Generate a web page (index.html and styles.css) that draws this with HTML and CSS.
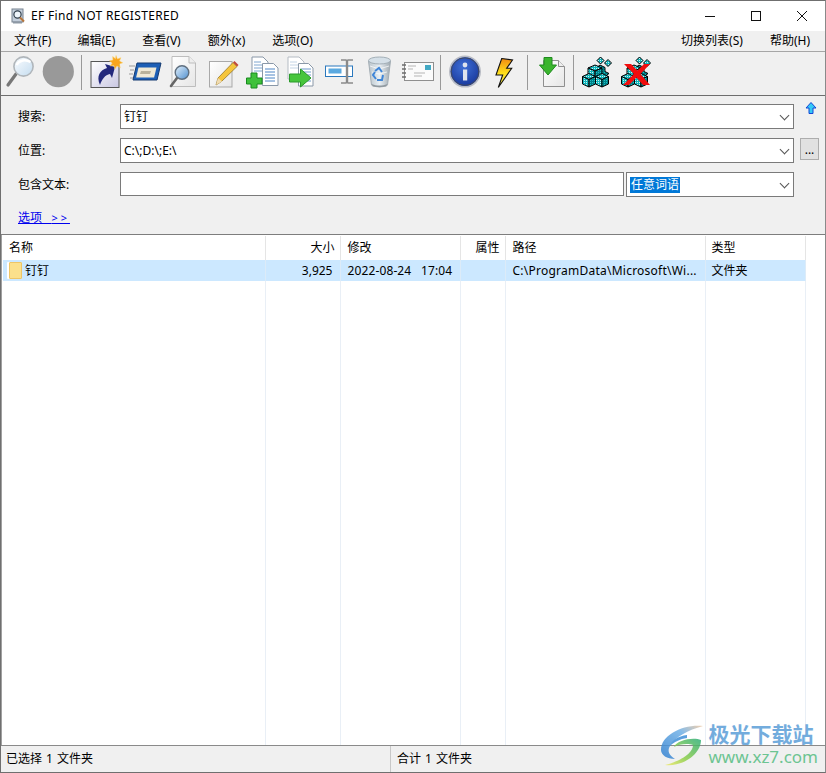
FILE: index.html
```html
<!DOCTYPE html>
<html lang="zh-CN">
  <head>
    <meta charset="UTF-8" />
    <meta name="viewport" content="width=device-width, initial-scale=1.0" />
    <link rel="stylesheet" href="styles.css">
    <title>EF Find NOT REGISTERED</title>
  </head>
  <body>
    <div class="window">
      <div class="titlebar">
        <svg class="app-icon" width="16" height="16" viewBox="0 0 16 16">
          <rect x="2" y="1" width="11" height="13" fill="#c3cedb" stroke="#76828f"/>
          <circle cx="7.5" cy="6.5" r="3.6" fill="#eef5fb" stroke="#34424f" stroke-width="1.2"/>
          <path d="M10 9.5l4 4" stroke="#b8763a" stroke-width="2"/>
          <path d="M3 14.500h9" stroke="#8d98a4" stroke-width="2"/>
        </svg>
        <span class="title-text">EF Find NOT REGISTERED</span>
        <div class="win-buttons">
          <svg width="10" height="10" viewBox="0 0 10 10"><path d="M0 5.5h10" stroke="#111"/></svg>
          <svg width="10" height="10" viewBox="0 0 10 10"><rect x=".5" y=".5" width="9" height="9" fill="none" stroke="#111"/></svg>
          <svg width="10" height="10" viewBox="0 0 10 10"><path d="M0 0l10 10M10 0L0 10" stroke="#111"/></svg>
        </div>
      </div>

      <div class="menubar">
        <span>文件(F)</span>
        <span>编辑(E)</span>
        <span>查看(V)</span>
        <span>额外(x)</span>
        <span>选项(O)</span>
        <span class="menu-right">切换列表(S)</span>
        <span>帮助(H)</span>
      </div>

      <div class="toolbar">
        <!-- every icon uses a viewBox in window coordinates -->
        <svg width="38" height="36" viewBox="1 55 38 36">
          <defs>
            <linearGradient id="lens" x1="0" y1="0" x2="1" y2="1">
              <stop offset="0" stop-color="#fbfdff"/>
              <stop offset="1" stop-color="#c4dcef"/>
            </linearGradient>
            <linearGradient id="lens2" x1="0" y1="0" x2="1" y2="1">
              <stop offset="0" stop-color="#e4f1fb"/>
              <stop offset="1" stop-color="#4e8fd0"/>
            </linearGradient>
            <linearGradient id="page" x1="0" y1="0" x2="1" y2="1">
              <stop offset="0" stop-color="#ffffff"/>
              <stop offset="1" stop-color="#e6e6e6"/>
            </linearGradient>
            <linearGradient id="lav" x1="0" y1="0" x2="1" y2="1">
              <stop offset="0" stop-color="#ffffff"/>
              <stop offset="1" stop-color="#c9c7e2"/>
            </linearGradient>
            <linearGradient id="bin" x1="0" y1="0" x2="1" y2="0">
              <stop offset="0" stop-color="#b9c4cb"/>
              <stop offset=".5" stop-color="#e8eff4"/>
              <stop offset="1" stop-color="#9fa9b0"/>
            </linearGradient>
            <radialGradient id="ball" cx=".45" cy=".35" r=".75">
              <stop offset="0" stop-color="#3f6fd6"/>
              <stop offset="1" stop-color="#122f92"/>
            </radialGradient>
            <linearGradient id="bolt" x1="0" y1="0" x2="0" y2="1">
              <stop offset="0" stop-color="#f08a12"/>
              <stop offset=".5" stop-color="#ffe01c"/>
              <stop offset="1" stop-color="#fff25c"/>
            </linearGradient>
            <pattern id="dots" width="2" height="2" patternUnits="userSpaceOnUse">
              <rect width="2" height="2" fill="#0fb4ba"/>
              <rect width="1" height="1" fill="#c8f4f4"/>
            </pattern>
            <pattern id="dots-dark" width="2" height="2" patternUnits="userSpaceOnUse">
              <rect width="2" height="2" fill="#007f86"/>
              <rect width="1" height="1" fill="#19c2c8"/>
            </pattern>
          </defs>
          <path d="M16 74L8 85" stroke="#777" stroke-width="3.2" stroke-linecap="round"/>
          <circle cx="23.5" cy="66.5" r="9.6" fill="url(#lens)" stroke="#b0b6bb" stroke-width="1.6"/>
          <path d="M16.5 65c3-5 9-6 14-3" stroke="#fff" stroke-width="2.4" fill="none"/>
        </svg>
        <svg width="38" height="36" viewBox="39 55 38 36">
          <circle cx="58.3" cy="71.6" r="15.6" fill="#999"/>
        </svg>
        <div class="tool-sep"></div>
        <svg width="40" height="36" viewBox="85 55 40 36">
          <rect x="91" y="61.5" width="28" height="26" fill="url(#lav)" stroke="#555"/>
          <path d="M100 85c-4-9 0-15 7-17l-2-4 10 3-3 11-2-4c-5 1-8 5-10 11z" fill="#23287c"/>
          <path d="M116 55.5l1.4 3.4 3.5-1.2-1.4 3.4 3.2 1.7-3.4 1.3 1 3.5-3.4-1.6-2 3-1-3.5-3.5.6 1.8-3.1-2.8-2.2 3.5-.7-.2-3.600 2.8 2.200z" fill="#f9a51e" stroke="#fbd36b" stroke-width=".5"/>
        </svg>
        <svg width="40" height="36" viewBox="125 55 40 36">
          <path d="M129 66h6M130 70h4M129 74h4M130 78h3" stroke="#9a9a9a"/>
          <path d="M137 63h24l-4 17h-24z" fill="#1d5fb5" stroke="#143a70"/>
          <path d="M138.500 67.500h18l-2.400 10h-18z" fill="#efe9d5"/>
          <path d="M141 71h10l-1 3h-10z" fill="#b9b29b"/>
        </svg>
        <svg width="38" height="36" viewBox="165 55 38 36">
          <path d="M172 56.500h17l6.500 6.500v23.500h-23.500z" fill="url(#page)" stroke="#bdbdbd"/>
          <path d="M189 56.500v6.500h6.500" fill="#eee" stroke="#bdbdbd"/>
          <path d="M177 78l-6 8" stroke="#666" stroke-width="2.600" stroke-linecap="round"/>
          <circle cx="182" cy="72.500" r="6.800" fill="url(#lens2)" stroke="#5f6f7f" stroke-width="1.400"/>
        </svg>
        <svg width="39" height="36" viewBox="203 55 39 36">
          <rect x="209.500" y="61.500" width="22.500" height="25.500" fill="url(#page)" stroke="#a9a9a9"/>
          <path d="M216 85l2-7 15-15.500 4 4-15.500 15z" fill="#f5c53c" stroke="#8a6a1c" stroke-width=".7"/>
          <path d="M216 85l2-7 4 3.500z" fill="#f1dcb0"/>
          <path d="M233 62.500l1.500-1.500 4 4-1.500 1.500z" fill="#c0483a"/>
        </svg>
        <svg width="40" height="36" viewBox="242 55 40 36">
          <path d="M252 57h11l5 5v18h-16z" fill="#fff" stroke="#8a98a8"/>
          <path d="M254 62h7M254 65h11M254 68h8M254 71h8" stroke="#7fa6d0"/>
          <path d="M262.500 63.500h11l4.500 4.500v17.500h-15.500z" fill="#fff" stroke="#8a98a8"/>
          <path d="M265 69h10M265 72h10M265 75h10M265 78h10M265 81h10" stroke="#4f86c6"/>
          <path d="M251 73h6v5h5v6h-5v4h-6v-4h-4.500v-6h4.500z" fill="#3fc13b" stroke="#188a1e"/>
        </svg>
        <svg width="38" height="36" viewBox="282 55 38 36">
          <path d="M288 57h11l5 5v17h-16z" fill="#fff" stroke="#b5bcc4"/>
          <path d="M290 62h7M290 65h11M290 68h11" stroke="#c3d4e6"/>
          <path d="M298.500 63.500h10l4.500 4.500v18h-14.500z" fill="#fff" stroke="#8a98a8"/>
          <path d="M301 69h10M301 72h10M306 75h5M306 78h5M301 81h10" stroke="#6f9bcb"/>
          <path d="M289.500 74h11v-5l10.500 9-10.500 9v-5h-11z" fill="#47c53c" stroke="#2a9a2a"/>
        </svg>
        <svg width="40" height="36" viewBox="320 55 40 36">
          <rect x="325.500" y="66" width="27" height="10.500" fill="#fff" stroke="#2a78bd"/>
          <rect x="328.500" y="68.500" width="13" height="5" fill="#5ba9e0"/>
          <path d="M341 60h5l1 1 1-1h5M341 83h5l1-1 1 1h5" fill="none" stroke="#8a8a8a" stroke-width="1.600"/>
          <path d="M347 61v21" stroke="#8a8a8a" stroke-width="2.400"/>
        </svg>
        <svg width="36" height="36" viewBox="360 55 36 36">
          <path d="M368.500 61l3 24c1.500 2.400 14.500 2.400 16 0l3-24c-3 3-19 3-22 0z" fill="url(#bin)" stroke="#a3adb4"/>
          <ellipse cx="379.500" cy="60.500" rx="11" ry="3.500" fill="#d5e0e8" stroke="#a3afb7"/>
          <path d="M370 66l9 3 10-3M372 72l7 2 8-2" fill="none" stroke="#fff" stroke-opacity=".7"/>
          <path d="M375 71l4-3 3 4M383 75l-1 5-5 0M376 79l-3-4 2-3" fill="none" stroke="#3f86d8" stroke-width="2"/>
          <path d="M372 84c4 2 11 2 15 0l-.5 2c-3 1.500-11 1.500-14 0z" fill="#8f989e"/>
        </svg>
        <svg width="40" height="36" viewBox="396 55 40 36">
          <rect x="404.500" y="62.500" width="29" height="18" fill="#fbfbfb" stroke="#8f8f8f"/>
          <rect x="425" y="65" width="6" height="5" fill="#43a9c4"/>
          <path d="M408 66h8M408 69h5M414 73h11M414 76h8" stroke="#b5b5b5"/>
          <path d="M402 65h4M402 69h4M402 73h4M402 77h4" stroke="#6c6c6c" stroke-width="1.400"/>
        </svg>
        <div class="tool-sep"></div>
        <svg width="41" height="36" viewBox="444 55 41 36">
          <circle cx="465" cy="71.600" r="15.200" fill="url(#ball)" stroke="#b9bcc4" stroke-width="1.600"/>
          <circle cx="465" cy="71.600" r="13.800" fill="none" stroke="#41495f"/>
          <rect x="463" y="69.500" width="4.200" height="11" fill="#dfe4ee"/>
          <circle cx="465" cy="65" r="2.400" fill="#dfe4ee"/>
        </svg>
        <svg width="38" height="36" viewBox="485 55 38 36">
          <path d="M501.700 58.500l10.800 1.500-5.800 8.300h5L498.300 87.500l4.400-12.500H496z" fill="url(#bolt)" stroke="#111" stroke-width="1.100" stroke-linejoin="miter"/>
        </svg>
        <div class="tool-sep"></div>
        <svg width="38" height="36" viewBox="531 55 38 36">
          <path d="M543.500 60.500h15l6 6v20h-21z" fill="url(#page)" stroke="#8f8f8f"/>
          <path d="M558.500 60.500v6h6" fill="#eee" stroke="#8f8f8f"/>
          <path d="M544 57.500h8v7.500h4.500l-8.500 10-8.500-10h4.500z" fill="#3bb52e" stroke="#1f8a1f"/>
        </svg>
        <div class="tool-sep"></div>
        <svg width="40" height="36" viewBox="577 55 40 36">
          <g id="cubes">
            <g stroke="#000" stroke-width="1">
              <path d="M600.500 57l3.500 3.500-3.500 3.500-3.500-3.500z" fill="url(#dots)"/>
              <path d="M608 59.500l3.500 3.500-3.500 3.500-3.500-3.500z" fill="url(#dots)"/>
              <path d="M600 65l5 2.500v4l4 2-4 3-5-2.500v-4l-4-2z" fill="url(#dots-dark)"/>
              <path d="M588 68l7-3 7 3-7 3z" fill="url(#dots)"/>
              <path d="M588 68l7 3v9l-7-3z" fill="url(#dots)"/>
              <path d="M602 68l-7 3v9l7-3z" fill="url(#dots-dark)"/>
              <path d="M582.500 76.500l6.500-3 6.500 3-6.500 3z" fill="url(#dots)"/>
              <path d="M582.500 76.500l6.500 3V87l-6.500-3z" fill="url(#dots)"/>
              <path d="M595.500 76.500l-6.500 3V87l6.500-3z" fill="url(#dots-dark)"/>
              <path d="M595.500 76.500l6.500-3 6.500 3-6.500 3z" fill="url(#dots)"/>
              <path d="M595.500 76.500l6.500 3V87l-6.500-3z" fill="url(#dots)"/>
              <path d="M608.500 76.500l-6.500 3V87l6.500-3z" fill="url(#dots-dark)"/>
            </g>
          </g>
        </svg>
        <svg width="40" height="36" viewBox="617 55 40 36">
          <use href="#cubes" x="39" y="0"/>
          <path d="M624 64h7l6.500 6.500L644 64h6l-9.500 10 9.500 11h-7l-6.500-7.500L629 85h-6l11-11z" fill="#f10d0d"/>
        </svg>
      </div>

      <form class="search-form">
        <label>搜索:</label>
        <div class="combo"><span>钉钉</span></div>
        <svg class="up-arrow" width="12" height="12" viewBox="0 0 12 12">
          <path d="M6 .5l5 5.500H8v5.500H4V6H1z" fill="#35c9f5" stroke="#1346d6"/>
        </svg>

        <label>位置:</label>
        <div class="combo"><span>C:\;D:\;E:\</span></div>
        <div class="browse-btn">...</div>

        <label>包含文本:</label>
        <div class="text-row">
          <div class="text-input"></div>
          <div class="combo combo-words"><span class="selected-text">任意词语</span></div>
        </div>
        <div></div>

        <a class="options-link">选项&nbsp;&nbsp;&nbsp;<span class="options-arrows">&gt;&gt;</span></a>
      </form>

      <div class="list">
        <table>
          <tr class="list-head">
            <td>名称</td>
            <td class="num">大小</td>
            <td>修改</td>
            <td class="num">属性</td>
            <td>路径</td>
            <td>类型</td>
          </tr>
          <tr class="list-row">
            <td>
              <div class="name-cell">
                <span class="folder-icon"></span>
                <span>钉钉</span>
              </div>
            </td>
            <td class="num size-val">3,925</td>
            <td class="date-cell">2022-08-24&nbsp;&nbsp;&nbsp;17:04</td>
            <td></td>
            <td class="path-cell">C:\ProgramData\Microsoft\Wi...</td>
            <td>文件夹</td>
          </tr>
          <tr class="list-fill">
            <td></td><td></td><td></td><td></td><td></td><td></td>
          </tr>
        </table>
      </div>

      <div class="statusbar">
        <div class="status-left">已选择 1 文件夹</div>
        <div>合计 1 文件夹</div>
      </div>

      <div class="watermark">
        <svg width="50" height="46" viewBox="665 720 50 46">
          <defs>
            <linearGradient id="wm-blue" x1="1" y1="0" x2="0" y2="1">
              <stop offset="0" stop-color="#f2c9a0"/>
              <stop offset=".35" stop-color="#6fb0e6"/>
              <stop offset="1" stop-color="#2f7fd0"/>
            </linearGradient>
            <linearGradient id="wm-green" x1="1" y1="0" x2="0" y2="1">
              <stop offset="0" stop-color="#2fae7a"/>
              <stop offset=".6" stop-color="#8fd04a"/>
              <stop offset="1" stop-color="#f2ea6a"/>
            </linearGradient>
          </defs>
          <path d="M710 724C690 722 668 733 668 748c0 5 6 9 14 9-6-4-8-8-5-13 5-9 18-16 33-20z" fill="url(#wm-blue)"/>
          <path d="M694 733c-9 1-16 6-17 11 4-4 10-7 17-8z" fill="#3f8fd8"/>
          <path d="M708 738c-8-3-24 0-27 7 5-3 14-4 19-2 0 9-15 17-28 20 18 2 36-11 36-25z" fill="url(#wm-green)"/>
        </svg>
        <div class="wm-text">
          <div class="wm-name">极光下载站</div>
          <div class="wm-url">www.xz7.com</div>
        </div>
      </div>
    </div>
  </body>
</html>
```

FILE: styles.css
```css
* {
  box-sizing: border-box;
}

body {
  margin: 0;
  font-family: "Noto Sans", "Noto Sans CJK SC", sans-serif;
  font-size: 12px;
  line-height: 16px;
  color: #000;
  background: #fff;
}

.window {
  position: relative;
  width: 826px;
  height: 773px;
  border: 1px solid #6f6f6f;
  border-right-color: #8a8a8a;
  display: flex;
  flex-direction: column;
  overflow: hidden;
}

.titlebar {
  height: 30px;
  flex: none;
  display: flex;
  align-items: center;
  padding-left: 9px;
  background: #fff;
}

.app-icon {
  margin-right: 5px;
}

.title-text {
  flex: 1;
  letter-spacing: 0.32px;
}

.win-buttons {
  display: flex;
  gap: 36px;
  padding-right: 18px;
}

.menubar {
  height: 21px;
  flex: none;
  display: flex;
  align-items: center;
  gap: 27px;
  padding: 0 15px 0 13px;
  background: #f0f0f0;
  border-bottom: 1px solid #a6a6a6;
}

.menubar span:first-child {
  margin-right: -1px;
}

.menu-right {
  margin-left: auto;
}

.toolbar {
  height: 44px;
  flex: none;
  display: flex;
  align-items: flex-start;
  padding-top: 3px;
  background: #f0f0f0;
  border-bottom: 1px solid #6e6e6e;
}

.toolbar svg {
  flex: none;
}

.tool-sep {
  flex: none;
  width: 1px;
  height: 35px;
  margin: 0 3px 0 4px;
  background: #999;
}

.search-form {
  height: 139px;
  flex: none;
  display: grid;
  grid-template-columns: 102px 674px 25px;
  grid-template-rows: 25px 25px 25px auto;
  row-gap: 9px;
  padding: 8px 0 0 17px;
  background: #f0f0f0;
  border-bottom: 1px solid #7d7d7d;
  align-items: center;
}

.combo,
.text-input {
  position: relative;
  height: 25px;
  display: flex;
  align-items: center;
  padding-left: 3px;
  background: #fff;
  border: 1px solid #7a7a7a;
}

.combo::after {
  content: "";
  position: absolute;
  right: 5px;
  top: 7px;
  width: 6px;
  height: 6px;
  border-right: 1px solid #555;
  border-bottom: 1px solid #555;
  transform: rotate(45deg);
}

.up-arrow {
  margin-left: 11px;
  align-self: start;
  margin-top: -2px;
}

.browse-btn {
  width: 19px;
  height: 22px;
  margin-left: 6px;
  align-self: start;
  text-align: center;
  line-height: 22px;
  background: #e1e1e1;
  border: 1px solid #adadad;
}

.text-row {
  display: flex;
  gap: 2px;
}

.text-input {
  flex: 1;
  height: 24px;
}

.combo-words {
  width: 168px;
}

.selected-text {
  padding: 0 1px;
  color: #fff;
  background: #0078d7;
}

.options-link {
  grid-column: 1 / 3;
  color: #0000ee;
  text-decoration: underline;
  align-self: start;
  margin-top: 4px;
}

.options-arrows {
  letter-spacing: 3px;
  font-size: 11px;
}

.list {
  flex: 1;
  min-height: 0;
  padding: 1px 0 0 1px;
  background: #fff;
  border-left: 1px solid #a0a0a0;
}

.list table {
  width: 802px;
  height: 100%;
  table-layout: fixed;
  border-collapse: collapse;
}

.list td {
  padding: 0 6px;
  border-right: 1px solid #e9eff6;
  white-space: nowrap;
  overflow: hidden;
}

.list td:nth-child(1) { width: 262px; }
.list td:nth-child(2) { width: 75px; }
.list td:nth-child(3) { width: 120px; padding-left: 7px; }
.list td:nth-child(4) { width: 45px; }
.list td:nth-child(5) { width: 200px; padding-left: 7px; }
.list td:nth-child(6) { width: 100px; }

.list .num {
  padding-right: 5px;
  text-align: right;
}

.list-head {
  height: 24px;
}

.list-head td {
  border-right-color: #e5e5e5;
}

.list-row {
  height: 21px;
  background: #cce8ff;
}

.list .list-row td {
  border-right-color: #dcebf8;
}

.list .list-row .size-val {
  padding-right: 7px;
}

.date-cell {
  letter-spacing: 0.12px;
}

.path-cell {
  letter-spacing: 0.24px;
}

.name-cell {
  display: flex;
  align-items: center;
  gap: 3px;
}

.folder-icon {
  width: 13px;
  height: 17px;
  background: #fbe08c;
  border: 1px solid #eec566;
  border-radius: 1px;
  box-shadow: -2px 0 0 #fff;
}

.list-fill td {
  background: #fff;
}

.statusbar {
  height: 27px;
  flex: none;
  display: flex;
  align-items: center;
  padding-left: 5px;
  word-spacing: 1px;
  background: #f0f0f0;
  border-top: 1px solid #8a8a8a;
}

.status-left {
  width: 385px;
  height: 100%;
  display: flex;
  align-items: center;
  margin-right: 6px;
  border-right: 1px solid #c8c8c8;
}

.watermark {
  position: absolute;
  right: 7px;
  bottom: 4px;
  display: flex;
  align-items: flex-start;
  opacity: 0.85;
}

.wm-name {
  font-size: 21px;
  line-height: 24px;
  font-weight: 700;
  color: #5b9ed8;
}

.wm-url {
  margin-top: 1px;
  font-size: 17px;
  line-height: 20px;
  color: #56bd82;
}
```
